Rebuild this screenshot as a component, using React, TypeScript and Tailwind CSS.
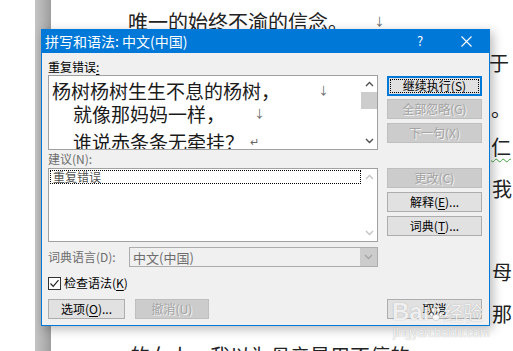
import React from "react";

const ChevUp = ({ c }: { c: string }) => (
  <svg width="9" height="6" viewBox="0 0 9 6">
    <path d="M1 5 L4.5 1.5 L8 5" fill="none" stroke={c} strokeWidth="1.4" />
  </svg>
);
const ChevDown = ({ c }: { c: string }) => (
  <svg width="9" height="6" viewBox="0 0 9 6">
    <path d="M1 1 L4.5 4.5 L8 1" fill="none" stroke={c} strokeWidth="1.4" />
  </svg>
);

function Btn({
  children,
  disabled,
  def,
  className = "",
}: {
  children: React.ReactNode;
  disabled?: boolean;
  def?: boolean;
  className?: string;
}) {
  if (def) {
    return (
      <div className={"h-[20px] border-2 border-[#0078d7] bg-[#e1e1e1] p-[1px] " + className}>
        <div className="h-full w-full border border-dotted border-black flex items-center justify-center text-[12px] leading-none text-black">
          {children}
        </div>
      </div>
    );
  }
  if (disabled) {
    return (
      <div
        className={
          "h-[20px] border border-[#bfbfbf] bg-[#cccccc] flex items-center justify-center text-[12px] leading-none text-[#a3a3a3] [text-shadow:1px_1px_0_#f4f4f4] " +
          className
        }
      >
        {children}
      </div>
    );
  }
  return (
    <div
      className={
        "h-[20px] border border-[#adadad] bg-[#e1e1e1] flex items-center justify-center text-[12px] leading-none text-black " +
        className
      }
    >
      {children}
    </div>
  );
}

export default function App() {
  const docChar = "text-[20px] leading-[20px] text-[#222]";
  const line = "h-[42px] shrink-0 flex items-center";
  return (
    <div className="relative w-[513px] h-[351px] overflow-hidden bg-white font-['Noto_Sans_CJK_SC',sans-serif]">
      {/* Document background */}
      <div className="flex h-full">
        <div className="w-[35px] bg-white" />
        <div className="w-[16px] bg-linear-to-r from-[#c4c4c4] via-[#b3b3b3] to-[#9d9d9d]" />
        <div className="flex-1 flex flex-col overflow-hidden">
          <div className={line + " pl-[77px] pt-[1px]"}>
            <span className={docChar}>唯一的始终不渝的信念。</span>
            <span className="ml-[26px] text-[11px] text-[#666]">↓</span>
          </div>
          <div className={line + " justify-end pr-[4px]"}>
            <span className={docChar}>于</span>
          </div>
          <div className={line + " justify-end pr-[2px]"}>
            <span className={docChar + " pt-[8px]"}>。</span>
          </div>
          <div className={line + " justify-end pr-[2px]"}>
            <span className={docChar + " underline decoration-wavy decoration-[#3fa33f] underline-offset-[3px] decoration-1"}>仁</span>
          </div>
          <div className={line + " justify-end pr-[1px]"}>
            <span className={docChar}>我</span>
          </div>
          <div className="h-[41px] shrink-0" />
          <div className={line + " justify-end pr-[1px]"}>
            <span className={docChar}>母</span>
          </div>
          <div className={line + " justify-end pr-[1px]"}>
            <span className={docChar}>那</span>
          </div>
          <div className={line + " pl-[79px]"}>
            <span className={docChar}>的女人，我以为母亲是用不停的</span>
          </div>
        </div>
      </div>

      {/* Dialog */}
      <div className="absolute left-[41px] top-[29px] w-[449px] h-[297px] flex flex-col shadow-[3px_3px_10px_rgba(0,0,0,0.28)]">
        <div className="h-[24px] bg-[#0078d7] flex items-center text-white relative">
          <span className="ml-[4px] text-[14px] leading-none">拼写和语法: 中文(中国)</span>
          <span className="absolute left-[376px] top-[4px] text-[13px] leading-[16px]">?</span>
          <svg className="absolute left-[420px] top-[7px]" width="11" height="11" viewBox="0 0 11 11">
            <path d="M0.5 0.5 L10.5 10.5 M10.5 0.5 L0.5 10.5" stroke="white" strokeWidth="1.1" />
          </svg>
        </div>
        <div className="flex-1 bg-[#f0f0f0] border-x border-b border-[#0078d7] pl-[6px] pr-[7px] flex flex-col text-[12px]">
          <div className="flex gap-[9px]">
            {/* left column */}
            <div className="w-[330px] flex flex-col">
              <div className="mt-[6px] h-[16px] leading-[16px] text-black">
                重复错误<span className="underline underline-offset-2">:</span>
              </div>
              <div className="h-[75px] border border-[#a0a0a0] bg-white flex overflow-hidden">
                <div className="flex-1 flex flex-col pl-[3px] text-[19px] leading-[19px] text-[#1a1a1a] overflow-hidden whitespace-nowrap">
                  <div className="mt-[5px] flex items-center shrink-0">
                    <span>杨树杨树生生不息的杨树，</span>
                    <span className="ml-[38px] text-[11px] text-[#666]">↓</span>
                  </div>
                  <div className="mt-[4px] pl-[21px] flex items-center shrink-0">
                    <span>就像那妈妈一样，</span>
                    <span className="ml-[29px] text-[11px] text-[#666]">↓</span>
                  </div>
                  <div className="mt-[9px] pl-[21px] flex items-center shrink-0">
                    <span>谁说赤条条无牵挂？</span>
                    <span className="ml-[6px] text-[11px] text-[#666]">↵</span>
                  </div>
                </div>
                <div className="w-[16px] flex flex-col items-center">
                  <div className="h-[16px] flex items-center justify-center">
                    <ChevUp c="#505050" />
                  </div>
                  <div className="w-[16px] h-[17px] bg-[#cdcdcd]" />
                  <div className="flex-1" />
                  <div className="h-[16px] flex items-center justify-center">
                    <ChevDown c="#505050" />
                  </div>
                </div>
              </div>
              <div className="h-[18px] leading-[18px] text-[#6d6d6d]">建议(N):</div>
              <div className="h-[74px] border border-[#a0a0a0] bg-white flex">
                <div className="flex-1 pl-[1px] pt-[1px]">
                  <div className="h-[14px] border border-dotted border-black flex items-center pl-[2px] text-[12px] leading-none text-[#555]">
                    重复错误
                  </div>
                </div>
                <div className="w-[16px] flex flex-col items-center">
                  <div className="h-[16px] flex items-center justify-center">
                    <ChevUp c="#c4c4c4" />
                  </div>
                  <div className="flex-1" />
                  <div className="h-[16px] flex items-center justify-center">
                    <ChevDown c="#c4c4c4" />
                  </div>
                </div>
              </div>
            </div>
            {/* right column */}
            <div className="w-[95px] flex flex-col pt-[23px]">
              <Btn def>
                继续执行(<span>S</span>)
              </Btn>
              <Btn disabled className="mt-[3px]">
                全部忽略(G)
              </Btn>
              <Btn disabled className="mt-[4px]">
                下一句(X)
              </Btn>
              <Btn disabled className="mt-[25px]">
                更改(C)
              </Btn>
              <Btn className="mt-[4px]">
                解释(<span className="underline underline-offset-2">E</span>)...
              </Btn>
              <Btn className="mt-[4px]">
                词典(<span className="underline underline-offset-2">T</span>)...
              </Btn>
            </div>
          </div>

          {/* dictionary language */}
          <div className="mt-[5px] h-[20px] flex items-center">
            <div className="w-[81px] text-[#6d6d6d] leading-none">词典语言(D):</div>
            <div className="w-[249px] h-[20px] border border-[#adadad] bg-[#f0f0f0] flex">
              <div className="flex-1 flex items-center pl-[3px] text-[#6d6d6d] text-[13px] leading-none">中文(中国)</div>
              <div className="w-[17px] bg-[#cccccc] flex items-center justify-center">
                <ChevDown c="#a6a6a6" />
              </div>
            </div>
          </div>

          {/* checkbox */}
          <div className="mt-[9px] h-[14px] flex items-center">
            <div className="w-[13px] h-[13px] border border-[#333] bg-white flex items-center justify-center">
              <svg width="11" height="11" viewBox="0 0 11 11">
                <path d="M1.5 5.5 L4.2 8.3 L9.5 2.2" fill="none" stroke="#222" strokeWidth="1.2" />
              </svg>
            </div>
            <span className="ml-[3px] text-black text-[12px] leading-none">
              检查语法(<span className="underline underline-offset-2">K</span>)
            </span>
          </div>

          {/* bottom buttons */}
          <div className="mt-[9px] h-[20px] flex">
            <Btn className="w-[77px]">
              选项(<span className="underline underline-offset-2">O</span>)...
            </Btn>
            <Btn disabled className="w-[74px] ml-[10px]">
              撤消(U)
            </Btn>
            <div className="flex-1" />
            <Btn className="w-[95px]">取消</Btn>
          </div>
        </div>
      </div>

      {/* watermark */}
      <div className="absolute left-[392px] top-[300px] flex flex-col items-start text-white/85 [text-shadow:0_0_1px_rgba(0,0,0,0.35)] font-['Liberation_Sans','Noto_Sans_CJK_SC',sans-serif]">
        <div className="flex items-end h-[24px]">
          <span className="text-[24px] leading-[24px] font-bold">Bai</span>
          <svg width="12" height="14" viewBox="0 0 12 14" className="mx-[1px] mb-[3px]">
            <g fill="white" fillOpacity="0.85" stroke="rgba(0,0,0,0.25)" strokeWidth="0.5">
              <ellipse cx="3" cy="3" rx="1.8" ry="2.3" />
              <ellipse cx="8.5" cy="3" rx="1.8" ry="2.3" />
              <ellipse cx="1.5" cy="7.5" rx="1.5" ry="2" />
              <ellipse cx="10.5" cy="7.5" rx="1.5" ry="2" />
              <ellipse cx="6" cy="10.5" rx="3.5" ry="3" />
            </g>
          </svg>
          <span className="text-[20px] leading-[22px] font-['Noto_Sans_CJK_SC',sans-serif]">经验</span>
        </div>
        <span className="mt-[3px] text-[12px] leading-[12px] ml-[1px]">jingyan.baidu.com</span>
      </div>
    </div>
  );
}
